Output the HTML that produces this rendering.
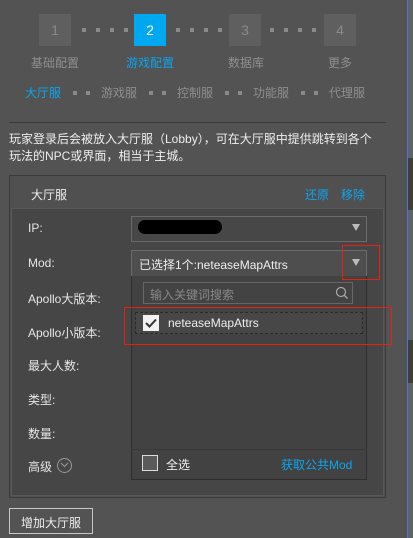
<!DOCTYPE html>
<html><head><meta charset="utf-8"><style>
*{margin:0;padding:0;box-sizing:border-box}
body{width:413px;height:538px;background:#535353;position:relative;overflow:hidden;font-family:"Liberation Sans","Noto Sans CJK SC",sans-serif;color:#e6e6e6;font-size:12px}
.a{position:absolute}
.step{position:absolute;top:14px;width:32px;height:32px;background:#5f5f5f;color:#8a8a8a;font-size:14px;text-align:center;line-height:32px}
.dot{position:absolute;width:4px;height:4px;background:#8a8a8a}
.lbl{position:absolute;top:54px;font-size:12px;color:#8f8f8f}
.tab{position:absolute;top:84px;font-size:12px;color:#8f8f8f}
.sd{position:absolute;top:91px;width:4px;height:4px;background:#8a8a8a}
.fl{position:absolute;left:28px;font-size:12px;color:#e6e6e6}
</style></head><body>
<div class="step" style="left:39px">1</div>
<div class="step" style="left:134px;background:#00a8f0;color:#fff">2</div>
<div class="step" style="left:229px">3</div>
<div class="step" style="left:324px">4</div>
<div class="dot" style="left:82px;top:28px"></div><div class="dot" style="left:96px;top:28px"></div><div class="dot" style="left:110px;top:28px"></div><div class="dot" style="left:124px;top:28px"></div>
<div class="dot" style="left:176px;top:28px"></div><div class="dot" style="left:190px;top:28px"></div><div class="dot" style="left:204px;top:28px"></div><div class="dot" style="left:218px;top:28px"></div>
<div class="dot" style="left:270px;top:28px"></div><div class="dot" style="left:284px;top:28px"></div><div class="dot" style="left:298px;top:28px"></div><div class="dot" style="left:312px;top:28px"></div>
<div class="lbl" style="left:31px">基础配置</div>
<div class="lbl" style="left:126px;color:#0aa6ee">游戏配置</div>
<div class="lbl" style="left:228px">数据库</div>
<div class="lbl" style="left:328px">更多</div>
<div class="tab" style="left:25px;color:#0aa6ee">大厅服</div>
<div class="sd" style="left:73px"></div><div class="sd" style="left:86px"></div>
<div class="tab" style="left:101px">游戏服</div>
<div class="sd" style="left:149px"></div><div class="sd" style="left:162px"></div>
<div class="tab" style="left:177px">控制服</div>
<div class="sd" style="left:225px"></div><div class="sd" style="left:238px"></div>
<div class="tab" style="left:253px">功能服</div>
<div class="sd" style="left:301px"></div><div class="sd" style="left:314px"></div>
<div class="tab" style="left:329px">代理服</div>
<div class="a" style="left:9px;top:122px;width:377px;height:1px;background:#3a3a3a"></div>
<div class="a" style="left:9px;top:131px;font-size:12px;line-height:17px;color:#eee;width:380px">玩家登录后会被放入大厅服（Lobby），可在大厅服中提供跳转到各个<br>玩法的NPC或界面，相当于主城。</div>
<div class="a" style="left:9px;top:175px;width:377px;height:323px;border:1px solid #3a3a3a;background:#505050"></div>
<div class="a" style="left:11px;top:208px;width:373px;height:288px;background:#464646;border:1px solid #575757"></div>
<div class="a" style="left:31px;top:186px;font-size:12px;color:#eee">大厅服</div>
<div class="a" style="left:305px;top:186px;font-size:12px;color:#0aa6ee">还原</div>
<div class="a" style="left:341px;top:186px;font-size:12px;color:#0aa6ee">移除</div>
<div class="fl" style="top:221px">IP:</div>
<div class="fl" style="top:256px">Mod:</div>
<div class="fl" style="top:290px">Apollo大版本:</div>
<div class="fl" style="top:324px">Apollo小版本:</div>
<div class="fl" style="top:357px">最大人数:</div>
<div class="fl" style="top:391px">类型:</div>
<div class="fl" style="top:425px">数量:</div>
<div class="fl" style="top:458px">高级</div>
<div class="a" style="left:57px;top:458px;width:15px;height:15px;border:1px solid #999;border-radius:50%"></div>
<svg class="a" style="left:60px;top:462px" width="9" height="6"><path d="M1 1 L4.5 4.5 L8 1" stroke="#999" fill="none"/></svg>
<div class="a" style="left:131px;top:216px;width:236px;height:26px;border:1px solid #6a6a6a;background:#474747"></div>
<div class="a" style="left:138px;top:220px;width:84px;height:14px;background:#000;border-radius:8px"></div>
<div class="a" style="left:352px;top:224px;width:0;height:0;border-left:4px solid transparent;border-right:4px solid transparent;border-top:7px solid #bbb"></div>
<div class="a" style="left:131px;top:250px;width:236px;height:27px;border:1px solid #6a6a6a;background:#4e4e4e"></div>
<div class="a" style="left:139px;top:256px;font-size:12px;color:#eee">已选择1个:neteaseMapAttrs</div>
<div class="a" style="left:352px;top:259px;width:0;height:0;border-left:4px solid transparent;border-right:4px solid transparent;border-top:7px solid #bbb"></div>
<div class="a" style="left:131px;top:276px;width:236px;height:204px;background:#424242;border:1px solid #2e2e2e;border-top:none"></div>
<div class="a" style="left:143px;top:282px;width:210px;height:22px;border:1px solid #666;background:#434343"></div>
<div class="a" style="left:150px;top:286px;font-size:12px;color:#888">输入关键词搜索</div>
<svg class="a" style="left:335px;top:286px" width="14" height="14"><circle cx="6" cy="6" r="4.5" stroke="#aaa" fill="none" stroke-width="1.2"/><path d="M9.5 9.5 L12.5 12.5" stroke="#aaa" stroke-width="1.3"/></svg>
<div class="a" style="left:135px;top:312px;width:228px;height:22px;border:1px dashed #2a2a2a;background:#474747"></div>
<div class="a" style="left:143px;top:315px;width:16px;height:16px;background:#f2f2f2"></div>
<svg class="a" style="left:143px;top:315px" width="16" height="16"><path d="M3 8 L6.5 11.5 L13 4.5" stroke="#333" stroke-width="2" fill="none"/></svg>
<div class="a" style="left:168px;top:316px;font-size:12px;color:#eee">neteaseMapAttrs</div>
<div class="a" style="left:131px;top:449px;width:236px;height:1px;background:#393939"></div>
<div class="a" style="left:142px;top:455px;width:16px;height:16px;border:1px solid #ddd;background:#5a5a5a"></div>
<div class="a" style="left:166px;top:456px;font-size:12px;color:#eee">全选</div>
<div class="a" style="left:281px;top:456px;font-size:12px;color:#0aa6ee">获取公共Mod</div>
<div class="a" style="left:124px;top:307px;width:268px;height:38px;border:1px solid #e8210f"></div>
<div class="a" style="left:342px;top:245px;width:38px;height:35px;border:1px solid #e8210f"></div>
<div class="a" style="left:9px;top:508px;width:84px;height:26px;border:1px solid #c8c8c8"></div>
<div class="a" style="left:21px;top:514px;font-size:12px;color:#eee">增加大厅服</div>
<div class="a" style="left:407px;top:0;width:1px;height:538px;background:#4a7ab8"></div>
<div class="a" style="left:408px;top:0;width:5px;height:538px;background:#5c6270"></div>
<div class="a" style="left:408px;top:158px;width:5px;height:52px;background:#3e3e3e"></div>
<div class="a" style="left:408px;top:340px;width:5px;height:43px;background:#3e3e3e"></div>
</body></html>
